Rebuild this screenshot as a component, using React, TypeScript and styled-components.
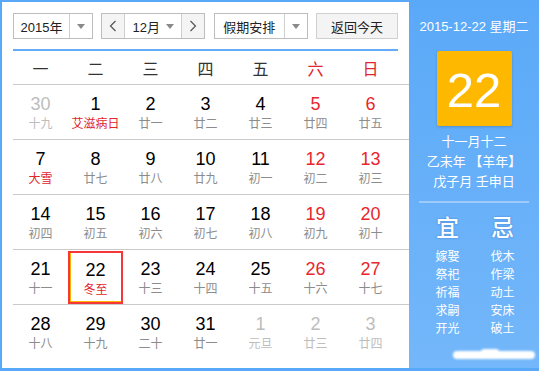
import React from "react";
import styled, {createGlobalStyle} from "styled-components";

const GlobalStyle = createGlobalStyle`
  html, body {
    margin: 0;
    padding: 0;
    background: #fff;
  }
  body {
    font-family: "Liberation Sans", "Noto Sans CJK SC", sans-serif;
  }
`;

const Frame = styled.div`
  display: flex;
  width: 539px;
  height: 371px;
  box-sizing: border-box;
  padding: 2px 0 3px 2px;
  background: #5aa9f8;
`;

const Main = styled.div`
  width: 407px;
  box-sizing: border-box;
  padding: 11px 0 0 11px;
  background: #fff;
`;

const Toolbar = styled.div`
  display: flex;
  justify-content: space-between;
  width: 385px;
  height: 26px;
`;

const Box = styled.div<{ $w: number }>`
  display: flex;
  width: ${p => p.$w}px;
  box-sizing: border-box;
  border: 1px solid #bdbdbd;
  font-size: 13px;
  color: #222;
`;

const Field = styled.div`
  flex: 1;
  display: flex;
  align-items: center;
  justify-content: center;
  background: #fff;
`;

const Part = styled.div<{ $gray?: boolean }>`
  width: 22px;
  display: flex;
  align-items: center;
  justify-content: center;
  background: ${p => (p.$gray ? "#f4f4f4" : "#fff")};
  ${Field} + & {
    border-left: 1px solid #cfcfcf;
  }
  & + ${Field} {
    border-left: 1px solid #cfcfcf;
  }
`;

const Caret = styled.span`
  width: 0;
  height: 0;
  border-left: 4px solid transparent;
  border-right: 4px solid transparent;
  border-top: 5px solid #8a8a8a;
`;

const InlineCaret = styled(Caret)`
  margin-left: 6px;
`;

const TodayButton = styled.button`
  width: 82px;
  box-sizing: border-box;
  border: 1px solid #cfcfcf;
  background: #f4f4f4;
  font-family: inherit;
  font-size: 13px;
  color: #222;
  padding: 0;
`;

const BlueLine = styled.div`
  width: 385px;
  height: 2px;
  margin-top: 10px;
  background: #62acf8;
`;

const Grid = styled.div`
  width: 385px;
  display: grid;
  grid-template-columns: repeat(7, 55px);
`;

const HeadCell = styled.div<{ $red?: boolean }>`
  height: 32px;
  display: flex;
  align-items: center;
  justify-content: center;
  font-size: 16px;
  color: ${p => (p.$red ? "#e0262b" : "#333")};
  padding-top: 1px;
`;

const WeekRow = styled.div`
  display: grid;
  grid-template-columns: repeat(7, 55px);
  height: 55px;
  box-sizing: border-box;
  border-top: 1px solid #cacaca;
`;

const Cell = styled.div<{ $today?: boolean }>`
  display: flex;
  flex-direction: column;
  align-items: center;
  box-sizing: border-box;
  padding-top: ${p => (p.$today ? 7 : 9)}px;
  border: ${p => (p.$today ? "2px solid #f5373a" : "none")};
  box-shadow: ${p => (p.$today ? "inset 1px -1px 0 #ffb400" : "none")};
  margin-top: ${p => (p.$today ? 1 : 0)}px;
`;

const Num = styled.div<{ $tone: "normal" | "red" | "muted" }>`
  font-size: 18px;
  line-height: 20px;
  color: ${p => (p.$tone === "red" ? "#e8262e" : p.$tone === "muted" ? "#bdbdbd" : "#000")};
`;

const Lunar = styled.div<{ $tone: "normal" | "red" | "muted" }>`
  font-size: 12px;
  line-height: 16px;
  margin-top: 2px;
  color: ${p => (p.$tone === "red" ? "#e0262b" : p.$tone === "muted" ? "#bdbdbd" : "#8c8c8c")};
`;

const Side = styled.div`
  flex: 1;
  display: flex;
  flex-direction: column;
  align-items: center;
  padding-top: 16px;
  background: linear-gradient(#5aa9f8, #74b7fa);
  color: #fff;
`;

const SideDate = styled.div`
  font-size: 13px;
  line-height: 18px;
`;

const DayTile = styled.div`
  width: 75px;
  height: 75px;
  margin-top: 15px;
  border-radius: 2px;
  background: #ffb800;
  box-shadow: 0 1px 3px rgba(0, 0, 0, 0.18);
  display: flex;
  align-items: center;
  justify-content: center;
  font-size: 49px;
  padding-top: 2px;
  box-sizing: border-box;
`;

const LunarInfo = styled.div`
  margin-top: 6px;
  font-size: 13px;
  line-height: 20px;
  text-align: center;
`;

const Divider = styled.div`
  width: 110px;
  height: 2px;
  margin-top: 9px;
  background: #9dccfb;
`;

const Almanac = styled.div`
  display: grid;
  grid-template-columns: 44px 44px;
  column-gap: 11px;
  margin-top: 12px;
  margin-left: 2px;
  text-align: center;
`;

const AlmanacHead = styled.div`
  font-size: 23px;
  line-height: 27px;
  font-weight: 500;
  text-shadow: 0 0 2px rgba(40, 90, 170, 0.6);
  margin-bottom: 6px;
`;

const AlmanacItem = styled.div`
  font-size: 12px;
  line-height: 18px;
`;

const Smudge = styled.div`
  position: relative;
  align-self: flex-end;
  margin: auto 4px 9px 0;
  width: 82px;
  height: 8px;
  border-radius: 4px;
  background: #fff;
  filter: blur(0.8px);
  &::after {
    content: "";
    position: absolute;
    left: 28px;
    top: -2px;
    width: 18px;
    height: 6px;
    border-radius: 3px;
    background: #fff;
  }
`;

type Tone = "normal" | "red" | "muted";
type Day = { n: number; l: string; nt?: Tone; lt?: Tone; today?: boolean };

const weekHead = ["一", "二", "三", "四", "五", "六", "日"];

const weeks: Day[][] = [
    [
        {n: 30, l: "十九", nt: "muted", lt: "muted"},
        {n: 1, l: "艾滋病日", lt: "red"},
        {n: 2, l: "廿一"},
        {n: 3, l: "廿二"},
        {n: 4, l: "廿三"},
        {n: 5, l: "廿四", nt: "red"},
        {n: 6, l: "廿五", nt: "red"},
    ],
    [
        {n: 7, l: "大雪", lt: "red"},
        {n: 8, l: "廿七"},
        {n: 9, l: "廿八"},
        {n: 10, l: "廿九"},
        {n: 11, l: "初一"},
        {n: 12, l: "初二", nt: "red"},
        {n: 13, l: "初三", nt: "red"},
    ],
    [
        {n: 14, l: "初四"},
        {n: 15, l: "初五"},
        {n: 16, l: "初六"},
        {n: 17, l: "初七"},
        {n: 18, l: "初八"},
        {n: 19, l: "初九", nt: "red"},
        {n: 20, l: "初十", nt: "red"},
    ],
    [
        {n: 21, l: "十一"},
        {n: 22, l: "冬至", lt: "red", today: true},
        {n: 23, l: "十三"},
        {n: 24, l: "十四"},
        {n: 25, l: "十五"},
        {n: 26, l: "十六", nt: "red"},
        {n: 27, l: "十七", nt: "red"},
    ],
    [
        {n: 28, l: "十八"},
        {n: 29, l: "十九"},
        {n: 30, l: "二十"},
        {n: 31, l: "廿一"},
        {n: 1, l: "元旦", nt: "muted", lt: "muted"},
        {n: 2, l: "廿三", nt: "muted", lt: "muted"},
        {n: 3, l: "廿四", nt: "muted", lt: "muted"},
    ],
];

const good = ["嫁娶", "祭祀", "祈福", "求嗣", "开光"];
const bad = ["伐木", "作梁", "动土", "安床", "破土"];

const Chevron: React.FC<{ dir: "left" | "right" }> = ({dir}) => (
    <svg width="8" height="12" viewBox="0 0 8 12">
        <polyline
            points={dir === "left" ? "6.5,1 1.5,6 6.5,11" : "1.5,1 6.5,6 1.5,11"}
            fill="none"
            stroke="#555"
            strokeWidth="1.2"
        />
    </svg>
);

export default function App() {
    return (
        <>
            <GlobalStyle/>
            <Frame>
                <Main>
                    <Toolbar>
                        <Box $w={80}>
                            <Field>2015年</Field>
                            <Part><Caret/></Part>
                        </Box>
                        <Box $w={104}>
                            <Part $gray><Chevron dir="left"/></Part>
                            <Field>12月<InlineCaret/></Field>
                            <Part $gray><Chevron dir="right"/></Part>
                        </Box>
                        <Box $w={94}>
                            <Field>假期安排</Field>
                            <Part><Caret/></Part>
                        </Box>
                        <TodayButton>返回今天</TodayButton>
                    </Toolbar>
                    <BlueLine/>
                    <Grid>
                        {weekHead.map((w, i) => (
                            <HeadCell key={w} $red={i >= 5}>{w}</HeadCell>
                        ))}
                    </Grid>
                    {weeks.map((week, wi) => (
                        <WeekRow key={wi}>
                            {week.map((d, di) => (
                                <Cell key={di} $today={d.today}>
                                    <Num $tone={d.nt ?? "normal"}>{d.n}</Num>
                                    <Lunar $tone={d.lt ?? "normal"}>{d.l}</Lunar>
                                </Cell>
                            ))}
                        </WeekRow>
                    ))}
                </Main>
                <Side>
                    <SideDate>2015-12-22 星期二</SideDate>
                    <DayTile>22</DayTile>
                    <LunarInfo>
                        <div>十一月十二</div>
                        <div>乙未年 【羊年】</div>
                        <div>戊子月 壬申日</div>
                    </LunarInfo>
                    <Divider/>
                    <Almanac>
                        <div>
                            <AlmanacHead>宜</AlmanacHead>
                            {good.map(g => <AlmanacItem key={g}>{g}</AlmanacItem>)}
                        </div>
                        <div>
                            <AlmanacHead>忌</AlmanacHead>
                            {bad.map(b => <AlmanacItem key={b}>{b}</AlmanacItem>)}
                        </div>
                    </Almanac>
                    <Smudge/>
                </Side>
            </Frame>
        </>
    );
}
